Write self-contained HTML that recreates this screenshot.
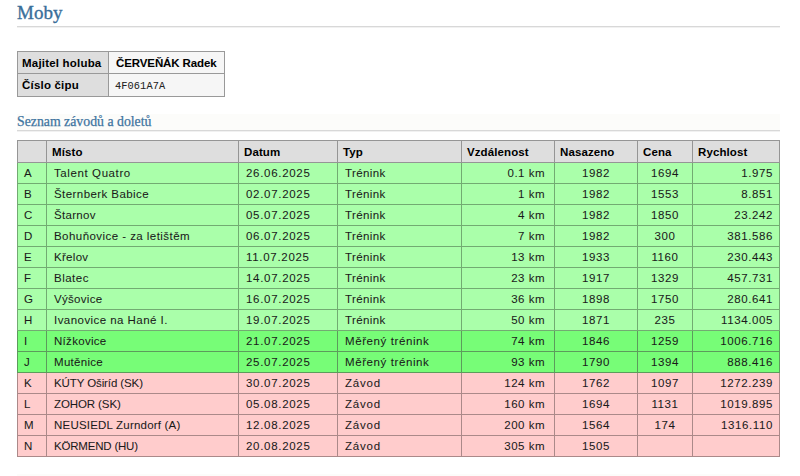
<!DOCTYPE html>
<html><head><meta charset="utf-8">
<style>
html,body{margin:0;padding:0;background:#fff;}
body{font-family:"Liberation Sans",sans-serif;font-size:11.5px;letter-spacing:0.25px;color:#1a1a1a;-webkit-text-stroke:0.05px #1a1a1a;width:800px;height:476px;overflow:hidden;position:relative;}
h1{position:absolute;left:17px;top:0;letter-spacing:0;width:763px;height:27px;margin:0;font-family:"Liberation Serif",serif;font-weight:normal;font-size:19px;color:#3a6f9a;border-bottom:1px solid #d8d8d8;box-shadow:0 1px 0 #f1f1f1;line-height:25px;-webkit-text-stroke:0.35px #3a6f9a;box-sizing:border-box;}
h2{position:absolute;left:17px;top:114px;width:763px;height:17px;padding-top:0;background:#fcfcfa;letter-spacing:0;-webkit-text-stroke:0.25px #3f74a0;margin:0;font-family:"Liberation Serif",serif;font-weight:normal;font-size:13.8px;color:#3f74a0;border-bottom:1px solid #d8d8d8;box-shadow:0 1px 0 #f1f1f1;line-height:15px;box-sizing:border-box;}
table{border-collapse:collapse;table-layout:fixed;position:absolute;}
td,th{border:1px solid #999;padding:0;white-space:nowrap;overflow:hidden;}
th{background:#dedede;text-align:left;font-weight:bold;color:#000;padding-left:5px;letter-spacing:0.1px;-webkit-text-stroke:0;}
td{padding-left:7px;}
#info{left:17px;top:51px;}
#info tr{height:22px;}
#info th{padding-left:4px;letter-spacing:0.2px;}
#info td{background:#f6f6f6;}
#info .mono{font-family:"Liberation Mono",monospace;font-size:10.3px;color:#222;padding-top:2px;padding-left:6px;letter-spacing:0.1px;}
#main{left:17px;top:140px;}
#main tr{height:21px;}
#main tr.h{height:22px;}
#main td.r{text-align:right;padding-right:6px;padding-left:0;letter-spacing:0.6px;}
#main td.k{text-align:right;padding-right:9px;padding-left:0;letter-spacing:0.5px;}
#main td.t{letter-spacing:0.3px;}
#main td:nth-child(3){letter-spacing:0.7px;}
#main td:first-child{padding-left:6px;}
#main td:nth-child(4){letter-spacing:0.4px;}
#main td.c{text-align:center;padding-left:0;letter-spacing:0.6px;}
tr.g td{background:#aaffaa;}
tr.m td{background:#77fd77;}
tr.p td{background:#ffcccc;}
tr.g td{border-color:#72ab72;}
tr.m td{border-color:#5c9c5c;}
tr.p td{border-color:#ab8989;}
#main th{border-color:#959595;}
</style></head><body>
<h1>Moby</h1>
<table id="info">
<colgroup><col style="width:91px"><col style="width:116px"></colgroup>
<tr><th>Majitel holuba</th><td style="font-weight:bold;color:#000;letter-spacing:-0.1px">ČERVEŇÁK Radek</td></tr>
<tr style="height:23px"><th>Číslo čipu</th><td class="mono">4F061A7A</td></tr>
</table>
<h2>Seznam závodů a doletů</h2>
<table id="main">
<colgroup><col style="width:29px"><col style="width:192px"><col style="width:99px"><col style="width:124px"><col style="width:93px"><col style="width:83px"><col style="width:55px"><col style="width:87px"></colgroup>
<tr class="h"><th></th><th>Místo</th><th>Datum</th><th>Typ</th><th>Vzdálenost</th><th>Nasazeno</th><th>Cena</th><th>Rychlost</th></tr>
<tr class="g"><td>A</td><td class="t" style="letter-spacing:0.6px">Talent Quatro</td><td>26.06.2025</td><td>Trénink</td><td class="k">0.1 km</td><td class="c">1982</td><td class="c">1694</td><td class="r">1.975</td></tr>
<tr class="g"><td>B</td><td class="t" style="letter-spacing:0.43px">Šternberk Babice</td><td>02.07.2025</td><td>Trénink</td><td class="k">1 km</td><td class="c">1982</td><td class="c">1553</td><td class="r">8.851</td></tr>
<tr class="g"><td>C</td><td class="t">Štarnov</td><td>05.07.2025</td><td>Trénink</td><td class="k">4 km</td><td class="c">1982</td><td class="c">1850</td><td class="r">23.242</td></tr>
<tr class="g"><td>D</td><td class="t" style="letter-spacing:0.45px">Bohuňovice - za letištěm</td><td>06.07.2025</td><td>Trénink</td><td class="k">7 km</td><td class="c">1982</td><td class="c">300</td><td class="r">381.586</td></tr>
<tr class="g"><td>E</td><td class="t">Křelov</td><td>11.07.2025</td><td>Trénink</td><td class="k">13 km</td><td class="c">1933</td><td class="c">1160</td><td class="r">230.443</td></tr>
<tr class="g"><td>F</td><td class="t" style="letter-spacing:0.5px">Blatec</td><td>14.07.2025</td><td>Trénink</td><td class="k">23 km</td><td class="c">1917</td><td class="c">1329</td><td class="r">457.731</td></tr>
<tr class="g"><td>G</td><td class="t">Výšovice</td><td>16.07.2025</td><td>Trénink</td><td class="k">36 km</td><td class="c">1898</td><td class="c">1750</td><td class="r">280.641</td></tr>
<tr class="g"><td>H</td><td class="t" style="letter-spacing:0.45px">Ivanovice na Hané I.</td><td>19.07.2025</td><td>Trénink</td><td class="k">50 km</td><td class="c">1871</td><td class="c">235</td><td class="r">1134.005</td></tr>
<tr class="m"><td>I</td><td class="t">Nížkovice</td><td>21.07.2025</td><td style="letter-spacing:0.6px">Měřený trénink</td><td class="k">74 km</td><td class="c">1846</td><td class="c">1259</td><td class="r">1006.716</td></tr>
<tr class="m"><td>J</td><td class="t">Mutěnice</td><td>25.07.2025</td><td style="letter-spacing:0.6px">Měřený trénink</td><td class="k">93 km</td><td class="c">1790</td><td class="c">1394</td><td class="r">888.416</td></tr>
<tr class="p"><td>K</td><td class="t" style="letter-spacing:-0.1px">KÚTY Oširíd (SK)</td><td>30.07.2025</td><td style="letter-spacing:0.8px">Závod</td><td class="k">124 km</td><td class="c">1762</td><td class="c">1097</td><td class="r">1272.239</td></tr>
<tr class="p"><td>L</td><td class="t" style="letter-spacing:-0.1px">ZOHOR (SK)</td><td>05.08.2025</td><td style="letter-spacing:0.8px">Závod</td><td class="k">160 km</td><td class="c">1694</td><td class="c">1131</td><td class="r">1019.895</td></tr>
<tr class="p"><td>M</td><td class="t" style="letter-spacing:0.2px">NEUSIEDL Zurndorf (A)</td><td>12.08.2025</td><td style="letter-spacing:0.8px">Závod</td><td class="k">200 km</td><td class="c">1564</td><td class="c">174</td><td class="r">1316.110</td></tr>
<tr class="p"><td>N</td><td class="t" style="letter-spacing:-0.2px">KÖRMEND (HU)</td><td>20.08.2025</td><td style="letter-spacing:0.8px">Závod</td><td class="k">305 km</td><td class="c">1505</td><td class="c"></td><td class="r"></td></tr>
</table>
<div style="position:absolute;left:17px;top:474px;width:763px;height:2px;background:#fcfcfa"></div>
</body></html>
